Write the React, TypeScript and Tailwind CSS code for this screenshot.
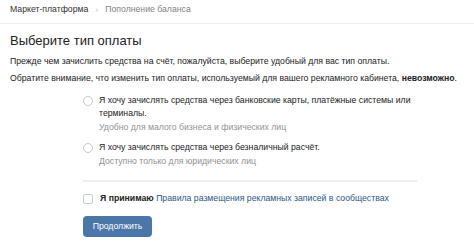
function Radio() {
  return (
    <span className="mt-[2px] h-[10px] w-[10px] shrink-0 rounded-full border border-[#c5cdd6] bg-white" />
  );
}

function Option({ title, hint }: { title: string; hint: string }) {
  return (
    <label className="flex gap-[6px]">
      <Radio />
      <div className="flex flex-col">
        <span className="leading-[13px] text-[#222]">{title}</span>
        <span className="mt-[1px] leading-[13px] text-[#939393]">{hint}</span>
      </div>
    </label>
  );
}

export default function App() {
  return (
    <div
      className="h-[251px] w-[474px] overflow-hidden bg-white text-[8.7px] text-[#222]"
      style={{ fontFamily: '"Liberation Sans", Arial, sans-serif' }}
    >
      <div className="flex h-[24px] items-center gap-[7px] border-b border-[#eceef0] px-[10px] pb-[4px]">
        <span className="text-[#333]">Маркет-платформа</span>
        <span className="mt-[2px] text-[#c0c7cf]">›</span>
        <span className="text-[#828282]">Пополнение баланса</span>
      </div>

      <div className="px-[10px]">
        <h1 className="mt-[7px] text-[13px] leading-[20px] text-[#222]">Выберите тип оплаты</h1>
        <p className="mt-[2px] leading-[17px]">
          Прежде чем зачислить средства на счёт, пожалуйста, выберите удобный для вас тип оплаты.
          <br />
          Обратите внимание, что изменить тип оплаты, используемый для вашего рекламного кабинета,{' '}
          <b>невозможно</b>.
        </p>
      </div>

      <div className="ml-[83px] mr-[57px] mt-[7px] flex flex-col">
        <div className="flex flex-col gap-[7px] pb-[12px]">
          <Option
            title="Я хочу зачислять средства через банковские карты, платёжные системы или терминалы."
            hint="Удобно для малого бизнеса и физических лиц"
          />
          <Option
            title="Я хочу зачислять средства через безналичный расчёт."
            hint="Доступно только для юридических лиц"
          />
        </div>
        <div className="h-[2px] bg-[#eceef0]" />

        <label className="mt-[10px] flex items-center gap-[7px]">
          <span className="h-[10px] w-[10px] rounded-[2px] border border-[#c5cdd6] bg-white" />
          <span>
            <b className="font-bold">Я принимаю</b>{' '}
            <span className="text-[#2a5885]">Правила размещения рекламных записей в сообществах</span>
          </span>
        </label>

        <button className="mt-[11px] h-[21px] w-[69px] rounded-[4px] bg-[#4a76a8] text-[8.7px] text-white">
          Продолжить
        </button>
      </div>
    </div>
  );
}
